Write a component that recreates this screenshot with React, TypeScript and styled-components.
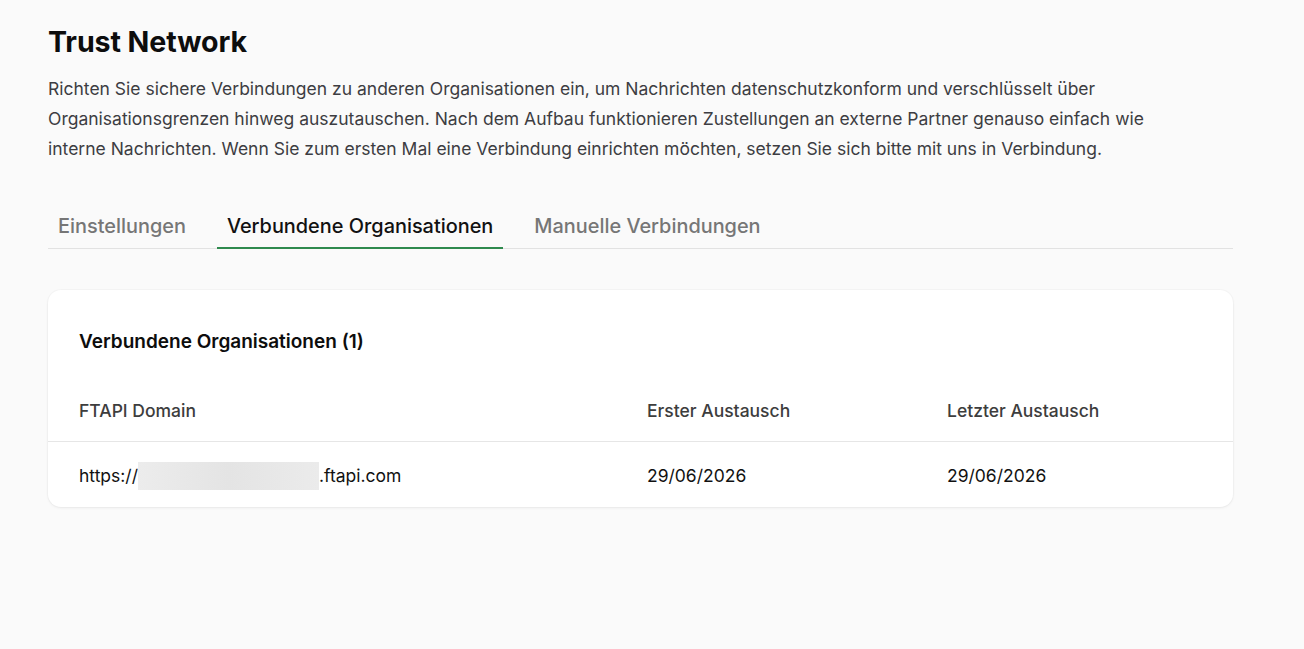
import React from "react";
import styled, { createGlobalStyle } from "styled-components";

const GlobalStyle = createGlobalStyle`
  html, body { margin: 0; padding: 0; background: #fafafa; }
  body { font-family: Inter, "Noto Sans", sans-serif; color: #1a1a1a; }
  * { box-sizing: border-box; }
`;

const Page = styled.main`
  padding: 22px 0 40px 48px;
  width: 1233px;
`;

const Title = styled.h1`
  margin: 0;
  font-size: 28.6px;
  font-weight: 700;
  letter-spacing: -0.1px;
  line-height: 40px;
  color: #0d0d0d;
`;

const Lead = styled.p`
  margin: 12px 0 0;
  max-width: 1110px;
  font-size: 17.5px;
  line-height: 30px;
  color: #3d3d42;
`;

const Tabs = styled.nav`
  display: flex;
  gap: 21px;
  margin-top: 40px;
  border-bottom: 1px solid #e2e2e2;
`;

const Tab = styled.button<{ $active?: boolean }>`
  appearance: none;
  background: none;
  border: none;
  padding: 8px 10px 7px;
  margin-bottom: -1px;
  font-family: inherit;
  font-size: 19.9px;
  font-weight: 500;
  line-height: 28px;
  color: ${(p) => (p.$active ? "#111" : "#767676")};
  border-bottom: 2px solid ${(p) => (p.$active ? "#2f8a4e" : "transparent")};
  cursor: pointer;
`;

const Card = styled.section`
  margin-top: 41px;
  background: #fff;
  border-radius: 13px;
  box-shadow: 0 1px 3px rgba(0, 0, 0, 0.06), 0 0 0 1px rgba(0, 0, 0, 0.02);
  padding: 38px 0 17px;
`;

const CardTitle = styled.h2`
  margin: 0 0 0 31px;
  font-size: 19px;
  font-weight: 600;
  line-height: 28px;
  color: #0d0d0d;
`;

const Row = styled.div<{ $head?: boolean }>`
  display: grid;
  grid-template-columns: 568px 300px 1fr;
  padding: ${(p) => (p.$head ? "0 31px 18px" : "20px 31px 0")};
  margin-top: ${(p) => (p.$head ? "43px" : "0")};
  font-size: 17.5px;
  line-height: 24px;
  color: ${(p) => (p.$head ? "#3d3d3d" : "#111")};
  font-weight: ${(p) => (p.$head ? 500 : 400)};
  border-bottom: ${(p) => (p.$head ? "1px solid #e6e6e6" : "none")};
`;

const Cell = styled.div`
  display: flex;
  align-items: center;
  white-space: nowrap;
`;

const Redacted = styled.span`
  display: inline-block;
  width: 181px;
  height: 28px;
  margin: 0 0 0 0;
  background: linear-gradient(90deg, #ececec, #e4e4e4 50%, #ebebeb);
  filter: blur(0.6px);
`;

export default function App() {
  return (
    <>
      <GlobalStyle />
      <Page>
        <Title>Trust Network</Title>
        <Lead>
          Richten Sie sichere Verbindungen zu anderen Organisationen ein, um Nachrichten datenschutzkonform und
          verschlüsselt über Organisationsgrenzen hinweg auszutauschen. Nach dem Aufbau funktionieren Zustellungen an
          externe Partner genauso einfach wie interne Nachrichten. Wenn Sie zum ersten Mal eine Verbindung einrichten
          möchten, setzen Sie sich bitte mit uns in Verbindung.
        </Lead>
        <Tabs>
          <Tab>Einstellungen</Tab>
          <Tab $active>Verbundene Organisationen</Tab>
          <Tab>Manuelle Verbindungen</Tab>
        </Tabs>
        <Card>
          <CardTitle>Verbundene Organisationen (1)</CardTitle>
          <Row $head>
            <Cell>FTAPI Domain</Cell>
            <Cell>Erster Austausch</Cell>
            <Cell>Letzter Austausch</Cell>
          </Row>
          <Row>
            <Cell>
              https://<Redacted />.ftapi.com
            </Cell>
            <Cell>29/06/2026</Cell>
            <Cell>29/06/2026</Cell>
          </Row>
        </Card>
      </Page>
    </>
  );
}
